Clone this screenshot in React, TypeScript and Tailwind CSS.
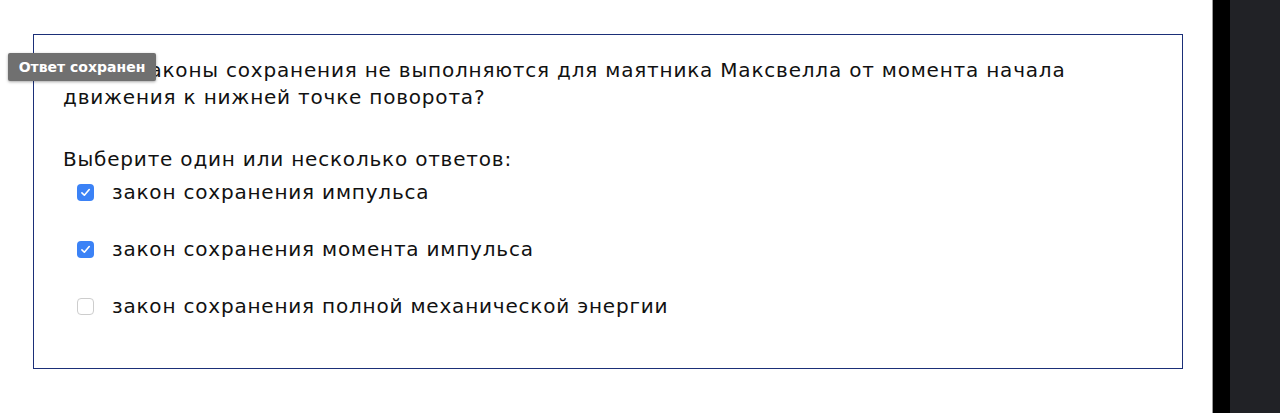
import React from "react";

const font = { fontFamily: "'DejaVu Sans', 'Noto Sans', sans-serif" };

function Check({ checked }: { checked: boolean }) {
  if (checked) {
    return (
      <span className="flex h-[17px] w-[17px] shrink-0 items-center justify-center rounded-[4px] bg-[#3b82f6]">
        <svg width="13" height="13" viewBox="0 0 16 16" fill="none">
          <path d="M3.6 8.4 L6.6 11.4 L12.6 4.4" stroke="white" strokeWidth="2" strokeLinecap="round" strokeLinejoin="round" />
        </svg>
      </span>
    );
  }
  return <span className="block h-[17px] w-[17px] shrink-0 rounded-[4px] border border-[#cdcdcd] bg-white" />;
}

export default function App() {
  const options = [
    { label: "закон сохранения импульса", checked: true },
    { label: "закон сохранения момента импульса", checked: true },
    { label: "закон сохранения полной механической энергии", checked: false },
  ];
  return (
    <div className="flex h-[413px] w-[1280px] overflow-hidden bg-white" style={font}>
      <div className="relative flex-1 bg-white">
        <div className="ml-[33px] mt-[34px] h-[335px] w-[1150px] border border-[#1b2f78] pl-[29px] pt-[22px] text-[#111] tracking-[0.8px]">
          <p className="w-[1010px] text-[20px] leading-[27px]">
            Какие законы сохранения не выполняются для маятника Максвелла от момента начала движения к нижней точке поворота?
          </p>
          <p className="mt-[35px] text-[20px] leading-[27px]">Выберите один или несколько ответов:</p>
          <div className="mt-[6px] flex flex-col gap-[30px] pl-[14px]">
            {options.map((o) => (
              <div key={o.label} className="flex h-[27px] items-center">
                <Check checked={o.checked} />
                <span className="ml-[18px] text-[20px] leading-[27px]">{o.label}</span>
              </div>
            ))}
          </div>
        </div>
        <div className="absolute left-[8px] top-[53px] flex h-[28px] w-[148px] items-center justify-center rounded-[2px] bg-[#707070] text-[14px] font-semibold text-white shadow-[0_1px_3px_rgba(0,0,0,0.35)]">
          Ответ сохранен
        </div>
      </div>
      <div className="w-px bg-[#9a9a9a]" />
      <div className="w-[17px] bg-black" />
      <div className="w-[50px] bg-[#212226]" />
    </div>
  );
}
